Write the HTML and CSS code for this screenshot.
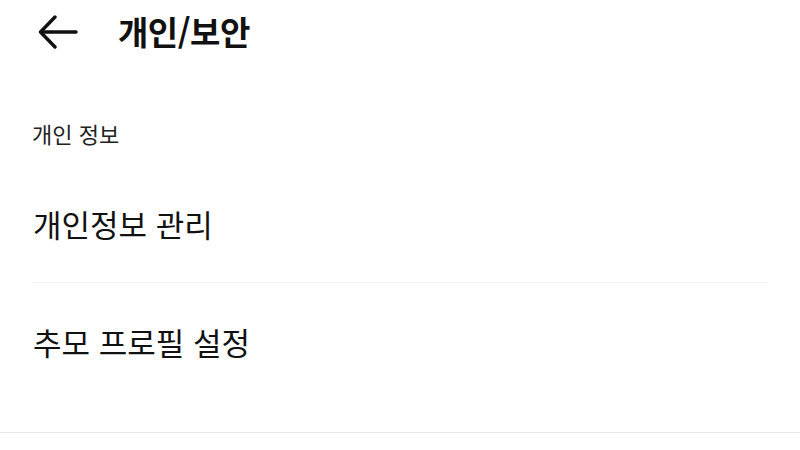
FILE: index.html
```html
<!DOCTYPE html>
<html lang="ko">
<head>
<meta charset="utf-8">
<link rel="stylesheet" href="styles.css">
</head>
<body>
<div class="page">
  <header class="topbar">
    <button class="back" aria-label="뒤로">
      <svg width="40" height="34" viewBox="0 0 40 34" fill="none" stroke="#111" stroke-width="3.4" stroke-linecap="round" stroke-linejoin="round">
        <path d="M38 17H3"/>
        <path d="M17 2L2.5 17L17 32"/>
      </svg>
    </button>
    <h1 class="title">개인/보안</h1>
  </header>
  <section class="section">
    <div class="section-label">개인 정보</div>
    <ul class="menu">
      <li class="menu-item">개인정보 관리</li>
      <li class="menu-item">추모 프로필 설정</li>
    </ul>
  </section>
</div>
</body>
</html>
```

FILE: styles.css
```css
* { box-sizing: border-box; }
html, body { margin: 0; padding: 0; background: #fff; }
body {
  font-family: "Noto Sans CJK KR", "Noto Sans", sans-serif;
  color: #111;
}
.page {
  width: 800px;
  height: 450px;
  overflow: hidden;
}
.topbar {
  display: flex;
  align-items: center;
  height: 63px;
  padding-left: 38px;
}
.back {
  display: flex;
  align-items: center;
  padding: 0;
  margin: 0;
  border: 0;
  background: none;
  width: 40px;
  height: 34px;
}
.title {
  margin: 0 0 0 40px;
  font-size: 33px;
  font-weight: 700;
  letter-spacing: -0.5px;
  line-height: 1;
}
.section {
  border-bottom: 1px solid #e8e8e8;
  padding: 0 32px;
  height: 370px;
}
.section-label {
  padding-top: 55px;
  font-size: 22px;
  line-height: 30px;
  color: #222;
}
.menu {
  list-style: none;
  margin: 0;
  padding: 0;
  margin-top: 17px;
}
.menu-item {
  height: 117px;
  display: flex;
  align-items: center;
  font-size: 31px;
  line-height: 1;
  padding-left: 1px;
}
.menu-item + .menu-item {
  border-top: 1px solid #f0f0f0;
}
```
